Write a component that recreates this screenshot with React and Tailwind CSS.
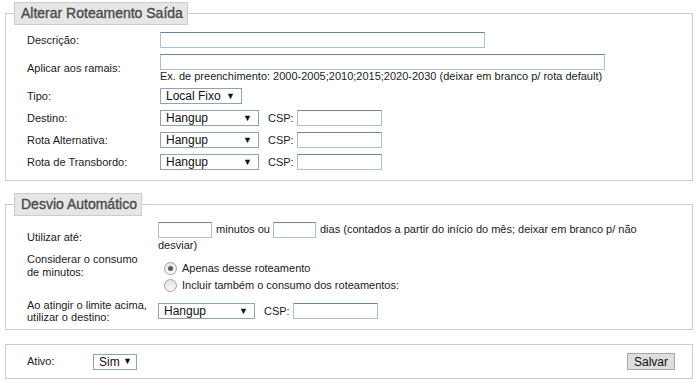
import React from 'react';

const font = { fontFamily: '"Liberation Sans", Arial, sans-serif' };

const TextInput = ({ className = '' }) => (
  <input
    type="text"
    className={`h-[16px] border border-[#abc0d0] border-t-[#6f879c] bg-white outline-none align-middle ${className}`}
  />
);

const FakeSelect = ({ value, className = '' }) => (
  <div
    className={`flex h-[16px] shrink-0 items-center justify-between border border-[#8aa4ba] bg-white pl-[5px] text-[12px] leading-none text-[#111] ${className}`}
  >
    <span>{value}</span>
    <span className="text-[9px]">▼</span>
  </div>
);

const Radio = ({ checked }) => (
  <span className="flex h-[13px] w-[13px] shrink-0 items-center justify-center rounded-full border border-[#a3a3a3] bg-gradient-to-b from-[#e2e2e2] to-[#f9f9f9]">
    {checked && <span className="h-[5px] w-[5px] rounded-full bg-[#5a5a5a]" />}
  </span>
);

const Legend = ({ children }) => (
  <legend className="ml-[8px] border border-[#cccccc] bg-[#e6e6e6] pl-[6px] pr-[4px] py-[3px] text-[14px] leading-[15px] text-[#4a4a4a] [-webkit-text-stroke:0.35px_#4a4a4a]">
    {children}
  </legend>
);

const Row = ({ label, children, className = 'h-[16px]' }) => (
  <div className={`flex items-center ${className}`}>
    <div className="w-[133px] shrink-0 leading-[13px]">{label}</div>
    <div className="flex flex-1 items-center">{children}</div>
  </div>
);

const Csp = () => (
  <>
    <span className="ml-[9px] mr-[3px]">CSP:</span>
    <TextInput className="w-[85px]" />
  </>
);

export default function App() {
  return (
    <div className="min-h-screen bg-white px-[5px] pt-[2px] text-[11px] text-[#1a1a1a]" style={font}>
      <fieldset className="border border-[#cccccc] pb-[10px]">
        <Legend>Alterar Roteamento Saída</Legend>
        <div className="flex flex-col gap-[6px] pl-[21px] pt-[7px]">
          <Row label="Descrição:">
            <TextInput className="w-[325px]" />
          </Row>
          <div className="flex h-[28px] items-center">
            <div className="w-[133px] shrink-0 leading-[13px]">Aplicar aos ramais:</div>
            <div className="flex flex-col">
              <TextInput className="w-[445px]" />
              <div className="h-[12px] leading-[12px]">
                Ex. de preenchimento: 2000-2005;2010;2015;2020-2030 (deixar em branco p/ rota default)
              </div>
            </div>
          </div>
          <Row label="Tipo:">
            <FakeSelect value="Local Fixo" className="w-[82px] pr-[6px]" />
          </Row>
          <Row label="Destino:">
            <FakeSelect value="Hangup" className="w-[99px] pr-[6px]" />
            <Csp />
          </Row>
          <Row label="Rota Alternativa:">
            <FakeSelect value="Hangup" className="w-[99px] pr-[6px]" />
            <Csp />
          </Row>
          <Row label="Rota de Transbordo:">
            <FakeSelect value="Hangup" className="w-[99px] pr-[6px]" />
            <Csp />
          </Row>
        </div>
      </fieldset>

      <fieldset className="mt-[12px] border border-[#cccccc] pb-[6px]">
        <Legend>Desvio Automático</Legend>
        <div className="flex flex-col pl-[21px] pt-[6px]">
          <div className="flex h-[30px] items-center">
            <div className="w-[131px] shrink-0 leading-[13px]">Utilizar até:</div>
            <div className="w-[500px] leading-[14px]">
              <TextInput className="mr-[1px] w-[54px]" /> minutos ou <TextInput className="mr-[1px] w-[43px]" /> dias
              (contados a partir do início do mês; deixar em branco p/ não desviar)
            </div>
          </div>
          <div className="mt-[1px] flex items-start">
            <div className="w-[131px] shrink-0 leading-[13px]">
              Considerar o consumo
              <br />
              de minutos:
            </div>
            <div className="flex flex-col gap-[3px] pl-[6px] pt-[8px]">
              <label className="flex h-[14px] items-center gap-[5px]">
                <Radio checked />
                <span>Apenas desse roteamento</span>
              </label>
              <label className="flex h-[14px] items-center gap-[5px]">
                <Radio />
                <span>Incluir também o consumo dos roteamentos:</span>
              </label>
            </div>
          </div>
          <div className="mt-[7px] flex h-[24px] items-center">
            <div className="w-[131px] shrink-0 leading-[12px]">
              Ao atingir o limite acima,
              <br />
              utilizar o destino:
            </div>
            <div className="flex items-center">
              <FakeSelect value="Hangup" className="w-[97px] pr-[6px]" />
              <Csp />
            </div>
          </div>
        </div>
      </fieldset>

      <div className="mt-[14px] flex h-[35px] items-center justify-between border border-[#cccccc] pl-[21px] pr-[17px]">
        <div className="flex items-center">
          <span className="w-[66px]">Ativo:</span>
          <FakeSelect value="Sim" className="w-[44px] pr-[4px]" />
        </div>
        <button className="h-[17px] border border-[#a8a8a8] bg-[#dedede] px-[6px] text-[12px] leading-none text-[#111]">
          Salvar
        </button>
      </div>
    </div>
  );
}
